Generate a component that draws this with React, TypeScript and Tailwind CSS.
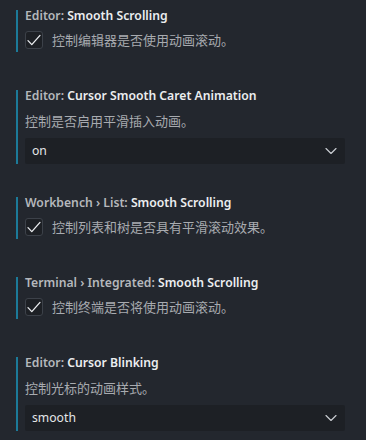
import { ChevronDown } from "lucide-react";

const LATIN = '"Noto Sans", "Noto Sans CJK SC", sans-serif';
const CJK = '"Noto Sans CJK SC", "Noto Sans", sans-serif';

type Item =
  | { cat: string; label: string; desc: string; kind: "check" }
  | { cat: string; label: string; desc: string; kind: "select"; value: string };

const ITEMS: Item[] = [
  { cat: "Editor: ", label: "Smooth Scrolling", desc: "控制编辑器是否使用动画滚动。", kind: "check" },
  { cat: "Editor: ", label: "Cursor Smooth Caret Animation", desc: "控制是否启用平滑插入动画。", kind: "select", value: "on" },
  { cat: "Workbench › List: ", label: "Smooth Scrolling", desc: "控制列表和树是否具有平滑滚动效果。", kind: "check" },
  { cat: "Terminal › Integrated: ", label: "Smooth Scrolling", desc: "控制终端是否将使用动画滚动。", kind: "check" },
  { cat: "Editor: ", label: "Cursor Blinking", desc: "控制光标的动画样式。", kind: "select", value: "smooth" },
];

function Check() {
  return (
    <div className="w-[18px] h-[18px] shrink-0 rounded-[3px] border border-[#3c4149] bg-[#1d2025] flex items-center justify-center">
      <svg width="16" height="16" viewBox="0 0 16 16" fill="none">
        <path d="M2 8.6 L5.8 12.6 L14 3.4" stroke="#eceef1" strokeWidth="1.3" strokeLinecap="round" strokeLinejoin="round" />
      </svg>
    </div>
  );
}

function Setting({ item }: { item: Item }) {
  return (
    <div className="flex">
      <div className="w-[2px] shrink-0 bg-[#1c7a99]" />
      <div className="pl-[7px] flex flex-col">
        <div className="h-[14px] text-[12.2px] leading-[12px] font-semibold whitespace-nowrap" style={{ fontFamily: LATIN }}>
          <span className="text-[#b5b8bc]">{item.cat}</span>
          <span className="text-[#eceef0]">{item.label}</span>
        </div>
        {item.kind === "check" ? (
          <div className="flex items-center gap-[9px] mt-[7px] mb-[3px] h-[18px]">
            <Check />
            <span className="text-[13px] leading-[18px] text-[#a8abb0] whitespace-nowrap" style={{ fontFamily: CJK }}>
              {item.desc}
            </span>
          </div>
        ) : (
          <>
            <div className="mt-[8px] h-[18px] text-[13px] leading-[18px] text-[#a8abb0] whitespace-nowrap" style={{ fontFamily: CJK }}>
              {item.desc}
            </div>
            <div className="mt-[8px] w-[320px] h-[26px] rounded-[2px] bg-[#1d2025] flex items-center justify-between pl-[7px] pr-[4px]">
              <span className="text-[12.2px] text-[#e4e6e9]" style={{ fontFamily: LATIN }}>
                {item.value}
              </span>
              <ChevronDown size={20} strokeWidth={1.4} className="text-[#c8cbd0]" />
            </div>
          </>
        )}
      </div>
    </div>
  );
}

export default function App() {
  return (
    <div className="w-[366px] h-[440px] bg-[#23272e] overflow-hidden pl-4 pt-[10px]">
      <div className="flex flex-col">
        <Setting item={ITEMS[0]} />
        <div className="mt-[38px]">
          <Setting item={ITEMS[1]} />
        </div>
        <div className="mt-[33px]">
          <Setting item={ITEMS[2]} />
        </div>
        <div className="mt-[38px]">
          <Setting item={ITEMS[3]} />
        </div>
        <div className="mt-[38px]">
          <Setting item={ITEMS[4]} />
        </div>
      </div>
    </div>
  );
}
